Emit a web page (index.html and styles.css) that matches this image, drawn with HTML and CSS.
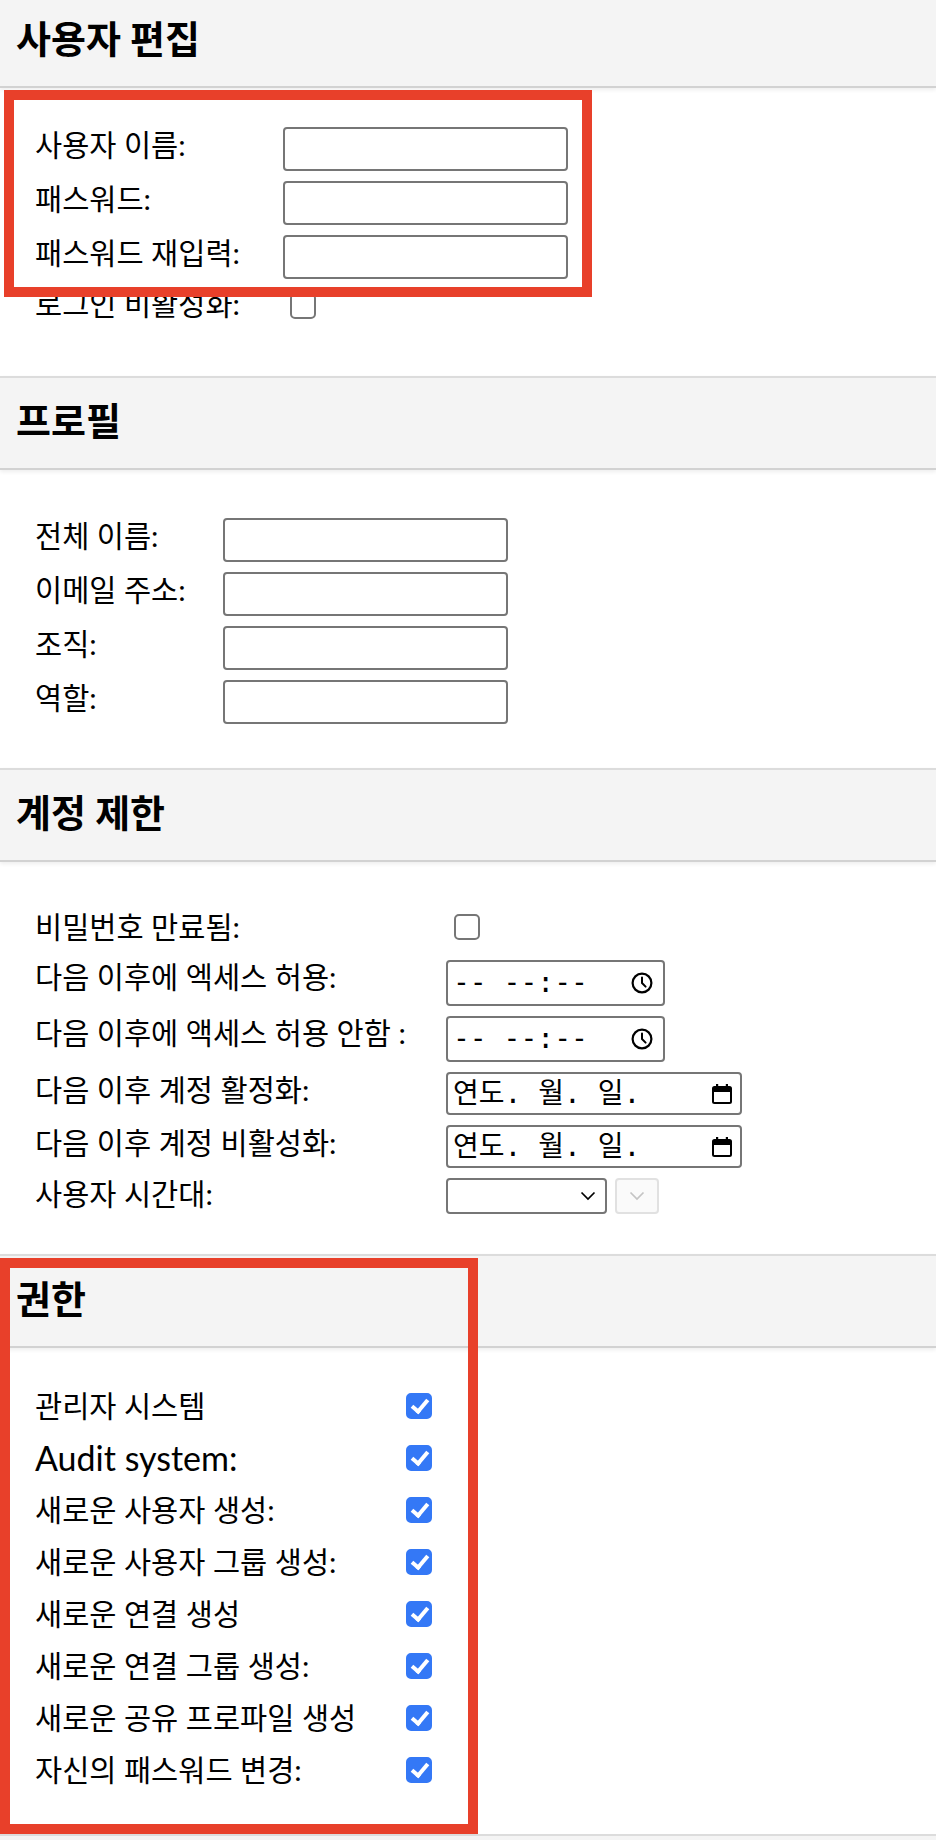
FILE: index.html
```html
<!DOCTYPE html>
<html lang="ko">
<head>
<meta charset="utf-8">
<title>사용자 편집</title>
<link rel="stylesheet" href="styles.css">
</head>
<body>
<div class="page">
  <section class="section">
    <h2 class="section-title section-title--first">사용자 편집</h2>
    <div class="fields fields--user">
      <div class="row row--text"><span class="label">사용자 이름:</span><input class="text-input" type="text"></div>
      <div class="row row--text"><span class="label">패스워드:</span><input class="text-input" type="password"></div>
      <div class="row row--text"><span class="label">패스워드 재입력:</span><input class="text-input" type="password"></div>
      <div class="row row--check-s"><span class="label">로그인 비활성화:</span><input class="checkbox" type="checkbox"></div>
    </div>
  </section>

  <section class="section">
    <h2 class="section-title">프로필</h2>
    <div class="fields fields--profile">
      <div class="row row--text"><span class="label">전체 이름:</span><input class="text-input" type="text"></div>
      <div class="row row--text"><span class="label">이메일 주소:</span><input class="text-input" type="text"></div>
      <div class="row row--text"><span class="label">조직:</span><input class="text-input" type="text"></div>
      <div class="row row--text"><span class="label">역할:</span><input class="text-input" type="text"></div>
    </div>
  </section>

  <section class="section">
    <h2 class="section-title">계정 제한</h2>
    <div class="fields fields--limits">
      <div class="row row--check"><span class="label">비밀번호 만료됨:</span><input class="checkbox" type="checkbox"></div>
      <div class="row row--time"><span class="label">다음 이후에 엑세스 허용:</span>
        <div class="fake-input fake-input--time"><span class="mono">-- --:--</span>
          <svg class="icon" viewBox="0 0 24 24" width="24" height="24"><circle cx="12" cy="12" r="9.4" fill="none" stroke="#000" stroke-width="2.2"/><path d="M12 6.6V12l3.6 3.6" fill="none" stroke="#000" stroke-width="2" stroke-linecap="round" stroke-linejoin="round"/></svg>
        </div>
      </div>
      <div class="row row--time"><span class="label">다음 이후에 액세스 허용 안함 :</span>
        <div class="fake-input fake-input--time"><span class="mono">-- --:--</span>
          <svg class="icon" viewBox="0 0 24 24" width="24" height="24"><circle cx="12" cy="12" r="9.4" fill="none" stroke="#000" stroke-width="2.2"/><path d="M12 6.6V12l3.6 3.6" fill="none" stroke="#000" stroke-width="2" stroke-linecap="round" stroke-linejoin="round"/></svg>
        </div>
      </div>
      <div class="row row--date"><span class="label">다음 이후 계정 활정화:</span>
        <div class="fake-input fake-input--date"><span class="mono">연도. 월. 일.</span>
          <svg class="icon" viewBox="0 0 22 22" width="22" height="22"><rect x="2" y="4" width="18" height="16" rx="1.5" fill="none" stroke="#000" stroke-width="2"/><rect x="2" y="4" width="18" height="5" fill="#000"/><rect x="5" y="1" width="2.2" height="4" fill="#000"/><rect x="14.8" y="1" width="2.2" height="4" fill="#000"/></svg>
        </div>
      </div>
      <div class="row row--date"><span class="label">다음 이후 계정 비활성화:</span>
        <div class="fake-input fake-input--date"><span class="mono">연도. 월. 일.</span>
          <svg class="icon" viewBox="0 0 22 22" width="22" height="22"><rect x="2" y="4" width="18" height="16" rx="1.5" fill="none" stroke="#000" stroke-width="2"/><rect x="2" y="4" width="18" height="5" fill="#000"/><rect x="5" y="1" width="2.2" height="4" fill="#000"/><rect x="14.8" y="1" width="2.2" height="4" fill="#000"/></svg>
        </div>
      </div>
      <div class="row row--select"><span class="label">사용자 시간대:</span>
        <div class="select">
          <svg class="chevron" viewBox="0 0 16 10" width="16" height="10"><path d="M1.5 1.5L8 8l6.5-6.5" fill="none" stroke="#000" stroke-width="1.7"/></svg>
        </div>
        <div class="select select--disabled">
          <svg class="chevron" viewBox="0 0 16 10" width="16" height="10"><path d="M1.5 1.5L8 8l6.5-6.5" fill="none" stroke="#c4c4c4" stroke-width="1.7"/></svg>
        </div>
      </div>
    </div>
  </section>

  <section class="section">
    <h2 class="section-title">권한</h2>
    <div class="fields fields--perms">
      <div class="row row--perm"><span class="label">관리자 시스템</span><input class="checkbox" type="checkbox" checked></div>
      <div class="row row--perm"><span class="label label--latin">Audit system:</span><input class="checkbox" type="checkbox" checked></div>
      <div class="row row--perm"><span class="label">새로운 사용자 생성:</span><input class="checkbox" type="checkbox" checked></div>
      <div class="row row--perm"><span class="label">새로운 사용자 그룹 생성:</span><input class="checkbox" type="checkbox" checked></div>
      <div class="row row--perm"><span class="label">새로운 연결 생성</span><input class="checkbox" type="checkbox" checked></div>
      <div class="row row--perm"><span class="label">새로운 연결 그룹 생성:</span><input class="checkbox" type="checkbox" checked></div>
      <div class="row row--perm"><span class="label">새로운 공유 프로파일 생성</span><input class="checkbox" type="checkbox" checked></div>
      <div class="row row--perm"><span class="label">자신의 패스워드 변경:</span><input class="checkbox" type="checkbox" checked></div>
    </div>
  </section>

  <div class="next-section"></div>

  <div class="annotation annotation--account"></div>
  <div class="annotation annotation--perms"></div>
</div>
</body>
</html>
```

FILE: styles.css
```css
html, body {
  margin: 0;
  padding: 0;
  background: #ffffff;
}

body {
  font-family: "Lato", "Noto Sans CJK KR", sans-serif;
  color: #000;
  overflow: hidden;
}

.page {
  position: relative;
  width: 936px;
  height: 1840px;
  overflow: hidden;
}

.section-title {
  margin: 0;
  height: 94px;
  box-sizing: border-box;
  padding: 23px 16px 0;
  border-top: 2px solid #dcdcdc;
  border-bottom: 2px solid #d2d2d2;
  background: #f4f4f4;
  font-family: "Lato", "Noto Sans CJK KR", sans-serif;
  font-size: 38px;
  font-weight: 700;
  line-height: 1;
  box-shadow: 0 2px 4px rgba(0, 0, 0, 0.07);
  position: relative;
}

.section-title--first {
  border-top: 0;
  height: 88px;
  padding-top: 19px;
}

.fields {
  display: flex;
  flex-direction: column;
  gap: 10px;
  padding-left: 35px;
}

.fields--user {
  --label-w: 248px;
  padding-top: 39px;
  padding-bottom: 53px;
}

.fields--profile {
  --label-w: 188px;
  padding-top: 48px;
  padding-bottom: 44px;
}

.fields--limits {
  --label-w: 411px;
  padding-top: 41px;
  padding-bottom: 40px;
}

.fields--perms {
  --label-w: 363px;
  gap: 0;
  padding-top: 32px;
  padding-bottom: 38px;
}

.row {
  display: flex;
  align-items: center;
}

.label {
  flex: none;
  width: var(--label-w);
  font-size: 29.5px;
  font-weight: 400;
  line-height: 1;
  padding-bottom: 8px;
  white-space: nowrap;
}

.label--latin {
  font-size: 34px;
}

.row--text { height: 44px; }
.row--check-s { height: 34px; }
.row--check-s .label { padding-bottom: 4px; }
.row--check { height: 47px; }
.row--check .label { padding-bottom: 0; }
.row--time { height: 46px; }
.row--time .label { padding-bottom: 12px; }
.row--date { height: 43px; }
.row--date .label { padding-bottom: 8px; }
.row--select { height: 36px; }
.row--select .label { padding-bottom: 4px; }
.row--perm { height: 52px; }
.row--perm .label { padding-bottom: 0; }

.text-input {
  -webkit-appearance: none;
  appearance: none;
  box-sizing: border-box;
  width: 285px;
  height: 44px;
  margin: 0;
  border: 2px solid #767676;
  border-radius: 4px;
  background: #fff;
  padding: 0 4px;
  font-size: 26px;
}

.checkbox {
  -webkit-appearance: none;
  appearance: none;
  box-sizing: border-box;
  position: relative;
  width: 26px;
  height: 26px;
  margin: 0 0 0 8px;
  border: 2px solid #767676;
  border-radius: 5px;
  background: #fff;
}

.fields--user .checkbox {
  margin-left: 7px;
}

.checkbox:checked {
  background: #3478f6;
  border-color: #3478f6;
}

.checkbox:checked::after {
  content: "";
  position: absolute;
  left: 7px;
  top: 1px;
  width: 6px;
  height: 13px;
  border-right: 4px solid #fff;
  border-bottom: 4px solid #fff;
  transform: rotate(40deg);
}

.fake-input {
  box-sizing: border-box;
  display: flex;
  align-items: center;
  justify-content: space-between;
  border: 2px solid #767676;
  border-radius: 4px;
  background: #fff;
}

.fake-input--time {
  width: 219px;
  height: 46px;
  padding: 0 9px 0 5px;
}

.fake-input--date {
  width: 296px;
  height: 43px;
  padding: 0 7px 0 5px;
}

.mono {
  font-family: "DejaVu Sans Mono", "Noto Sans CJK KR", monospace;
  font-size: 28px;
  line-height: 1;
  white-space: pre;
}

.icon {
  display: block;
  flex: none;
}

.select {
  box-sizing: border-box;
  display: flex;
  align-items: center;
  justify-content: flex-end;
  width: 161px;
  height: 36px;
  padding-right: 9px;
  border: 2px solid #767676;
  border-radius: 4px;
  background: #fff;
}

.select--disabled {
  width: 44px;
  margin-left: 8px;
  justify-content: center;
  padding-right: 0;
  border-color: #e1e1e1;
  background: #fafafa;
}

.chevron {
  display: block;
}

.next-section {
  border-top: 2px solid #dcdcdc;
  background: #f4f4f4;
  height: 20px;
}

.annotation {
  position: absolute;
  box-sizing: border-box;
  border: 10px solid #e8402a;
  pointer-events: none;
}

.annotation--account {
  left: 4px;
  top: 90px;
  width: 588px;
  height: 207px;
}

.annotation--perms {
  left: 0;
  top: 1258px;
  width: 478px;
  height: 576px;
}
```
